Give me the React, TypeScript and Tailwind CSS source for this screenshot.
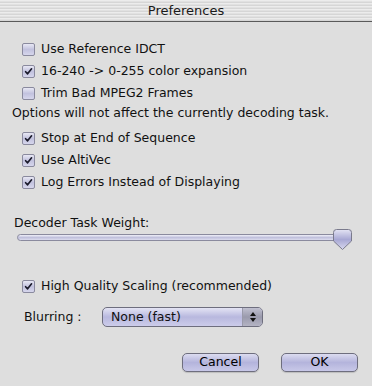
function Check({ checked }: { checked: boolean }) {
  return (
    <span className="flex h-[13px] w-[13px] shrink-0 items-center justify-center rounded-[2px] border border-[#8a8a9e] bg-gradient-to-b from-[#e8e8f4] via-[#c2c2de] to-[#d6d6ec]">
      {checked && (
        <svg viewBox="0 0 10 10" className="h-[9px] w-[9px]">
          <path d="M1.8 5.2 L4 7.6 L8.4 2" fill="none" stroke="#1a1a2a" strokeWidth={1.8} strokeLinecap="round" strokeLinejoin="round" />
        </svg>
      )}
    </span>
  )
}

function Row({ checked, label }: { checked: boolean; label: string }) {
  return (
    <div className="flex h-[22px] items-center gap-[6px] pl-[22px]">
      <Check checked={checked} />
      <span>{label}</span>
    </div>
  )
}

function Button({ label }: { label: string }) {
  return (
    <button className="flex h-[19px] w-[77px] items-center justify-center rounded-[5px] border border-[#6e6e7e] bg-gradient-to-b from-[#dcdcf0] via-[#b4b4dc] to-[#c8c8e8] leading-none text-black shadow-[0_1px_1px_rgba(0,0,0,0.15)]">
      {label}
    </button>
  )
}

export default function App() {
  return (
    <div className="h-[386px] w-[372px] overflow-hidden bg-[#dedede] font-['DejaVu_Sans',sans-serif] text-[12.5px] text-[#111]">
      <div className="flex h-[22px] items-center justify-center border-b border-[#5a5a5a] bg-[repeating-linear-gradient(to_bottom,#ececec_0px,#ececec_1px,#d6d6d6_2px,#d6d6d6_3px)] text-[13px] text-[#1a1a1a]">
        Preferences
      </div>

      <div className="flex flex-col pt-[16px]">
        <Row checked={false} label="Use Reference IDCT" />
        <Row checked={true} label="16-240 -> 0-255 color expansion" />
        <Row checked={false} label="Trim Bad MPEG2 Frames" />
        <div className="flex h-[18px] items-center pl-[12px]">Options will not affect the currently decoding task.</div>

        <div className="mt-[5px] flex flex-col">
          <Row checked={true} label="Stop at End of Sequence" />
          <Row checked={true} label="Use AltiVec" />
          <Row checked={true} label="Log Errors Instead of Displaying" />
        </div>

        <div className="mt-[23px] flex h-[14px] items-center pl-[14px]">Decoder Task Weight:</div>
        <div className="relative -mt-[1px] ml-[17px] h-[21px] w-[336px]">
          <div className="absolute top-[5px] left-0 h-[7px] w-[326px] rounded-full border border-[#8a8a9e] bg-gradient-to-b from-[#f0f0f8] via-[#c0c0dc] to-[#dcdcee]" />
          <svg viewBox="0 0 19 21" className="absolute top-0 left-[316px] h-[21px] w-[19px]">
            <defs>
              <linearGradient id="thumb" x1="0" y1="0" x2="0" y2="1">
                <stop offset="0" stopColor="#e4e4f4" />
                <stop offset="0.5" stopColor="#a8a8d4" />
                <stop offset="1" stopColor="#d8d8ee" />
              </linearGradient>
            </defs>
            <path d="M3.5 0.5 H15.5 Q18.5 0.5 18.5 3.5 V12 L9.5 20.5 L0.5 12 V3.5 Q0.5 0.5 3.5 0.5 Z" fill="url(#thumb)" stroke="#7a7a8c" />
          </svg>
        </div>

        <div className="mt-[25px]">
          <Row checked={true} label="High Quality Scaling (recommended)" />
        </div>

        <div className="mt-[10px] flex items-center pl-[24px]">
          <span className="w-[78px]">Blurring :</span>
          <div className="flex h-[20px] w-[161px] overflow-hidden rounded-[5px] border border-[#6e6e7e] bg-gradient-to-b from-[#e4e4f4] via-[#b8b8de] to-[#ccccea]">
            <span className="flex flex-1 items-center pl-[8px]">None (fast)</span>
            <span className="flex w-[20px] items-center justify-center border-l border-[#9a9aaa] bg-gradient-to-b from-[#c0c0d0] via-[#9a9aac] to-[#b4b4c4]">
              <svg viewBox="0 0 8 12" className="h-[12px] w-[8px]">
                <path d="M4 1 L7 5 H1 Z M4 11 L1 7 H7 Z" fill="#111" />
              </svg>
            </span>
          </div>
        </div>

        <div className="mt-[26px] flex justify-end gap-[22px] pr-[14px]">
          <Button label="Cancel" />
          <Button label="OK" />
        </div>
      </div>
    </div>
  )
}
